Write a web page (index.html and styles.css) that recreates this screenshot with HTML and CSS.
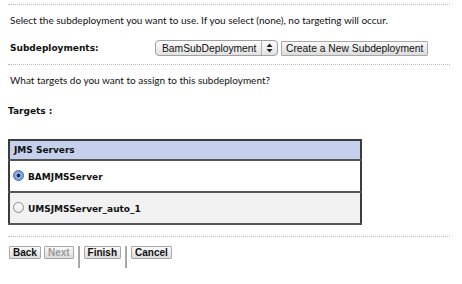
FILE: index.html
```html
<!DOCTYPE html>
<html lang="en">
<head>
  <meta charset="UTF-8">
  <title>Target Subdeployment</title>
  <link rel="stylesheet" href="styles.css">
</head>
<body>
  <div class="page">
    <div class="rule"></div>
    <p class="intro">Select the subdeployment you want to use. If you select (none), no targeting will occur.</p>
    <div class="field">
      <span class="field-label">Subdeployments:</span>
      <div class="controls">
        <div class="select">
          <span class="select-value">BamSubDeployment</span>
          <span class="select-arrows">
            <svg width="7" height="10" viewBox="0 0 7 10"><path d="M3.5 0.5 L6.5 4 H0.5 Z M3.5 9.5 L6.5 6 H0.5 Z" fill="#222"/></svg>
          </span>
        </div>
        <button class="btn">Create a New Subdeployment</button>
      </div>
    </div>
    <div class="rule"></div>
    <p class="intro">What targets do you want to assign to this subdeployment?</p>
    <p class="section-label">Targets :</p>

    <table class="targets">
      <thead>
        <tr><th>JMS Servers</th></tr>
      </thead>
      <tbody>
        <tr class="row-white">
          <td><span class="radio checked"></span>BAMJMSServer</td>
        </tr>
        <tr class="row-gray">
          <td><span class="radio"></span>UMSJMSServer_auto_1</td>
        </tr>
      </tbody>
    </table>

    <div class="rule rule-bottom"></div>
    <div class="wizard">
      <button class="btn btn-bold">Back</button>
      <button class="btn btn-bold" disabled>Next</button>
      <span class="sep"></span>
      <button class="btn btn-bold">Finish</button>
      <span class="sep"></span>
      <button class="btn btn-bold">Cancel</button>
    </div>
  </div>
</body>
</html>
```

FILE: styles.css
```css
body {
  margin: 0;
  padding: 0;
  background: #ffffff;
  color: #111111;
  font-family: 'Liberation Sans', Arial, sans-serif;
  font-size: 10px;
}

.page {
  width: 442px;
  padding: 4px 0 0 8px;
}

.rule {
  border-top: 1px dotted #b8b8b8;
}

.intro {
  margin: 0;
  padding: 9px 0 0 2px;
  line-height: 12px;
  font-family: Lato, 'Liberation Sans', sans-serif;
  font-size: 10px;
}

.field {
  display: flex;
  align-items: center;
  margin: 14px 0 8px;
  padding-left: 2px;
}

.field-label {
  width: 145px;
  font-family: 'DejaVu Sans', Verdana, sans-serif;
  font-weight: bold;
  font-size: 9px;
}

.controls {
  display: flex;
  align-items: center;
  gap: 3px;
}

.select {
  display: flex;
  align-items: center;
  width: 121px;
  height: 14px;
  border: 1px solid #a0a0a0;
  border-radius: 4px;
  background: linear-gradient(#fdfdfd, #e2e2e2);
  font-size: 10.3px;
}

.select-value {
  flex: 1;
  padding-left: 6px;
}

.select-arrows {
  display: flex;
  align-items: center;
  justify-content: center;
  width: 15px;
  height: 14px;
  border-left: 1px solid #b0b0b0;
}

.btn {
  font-family: 'Liberation Sans', Arial, sans-serif;
  font-size: 10.3px;
  color: #111111;
  height: 15px;
  padding: 0 4px;
  border: 1px solid #a8a8a8;
  border-radius: 1px;
  background: linear-gradient(#fafafa, #dcdcdc);
  line-height: 13px;
}

.btn-bold {
  font-weight: bold;
  font-size: 10px;
  height: 13px;
  line-height: 11px;
  padding: 0 3px;
}

.btn:disabled {
  color: #9a9a9a;
}

.section-label {
  margin: 19px 0 0;
  font-family: 'DejaVu Sans', Verdana, sans-serif;
  font-weight: bold;
  font-size: 9px;
  line-height: 12px;
}

.targets {
  width: 354px;
  margin-top: 22px;
  border-collapse: collapse;
  border: 2px solid #3c3c3c;
  font-family: 'DejaVu Sans', Verdana, sans-serif;
  font-weight: bold;
  font-size: 9px;
}

.targets th {
  text-align: left;
  height: 18px;
  padding: 0 0 0 4px;
  background: #c5d0ec;
  border-bottom: 2px solid #555555;
}

.targets td {
  height: 30px;
  padding: 0 0 0 3px;
  border-bottom: 2px solid #555555;
}

.row-white td {
  background: #ffffff;
}

.row-gray td {
  background: #f2f2f2;
}

.radio {
  display: inline-block;
  width: 9px;
  height: 9px;
  margin-right: 4px;
  vertical-align: -1px;
  border: 1px solid #8a8a8a;
  border-radius: 50%;
  background: linear-gradient(#ffffff, #e8e8e8);
}

.radio.checked {
  border-color: #4a6fa8;
  background: radial-gradient(circle, #1d2a40 0 1.6px, #8fb4ea 2.2px, #5d8fd6 100%);
}

.rule-bottom {
  margin-top: 11px;
}

.wizard {
  display: flex;
  align-items: flex-start;
  gap: 3px;
  margin-top: 9px;
  padding-left: 1px;
}

.sep {
  width: 2px;
  height: 22px;
  margin: 0 1px;
  background: #a8a8a8;
}
```
